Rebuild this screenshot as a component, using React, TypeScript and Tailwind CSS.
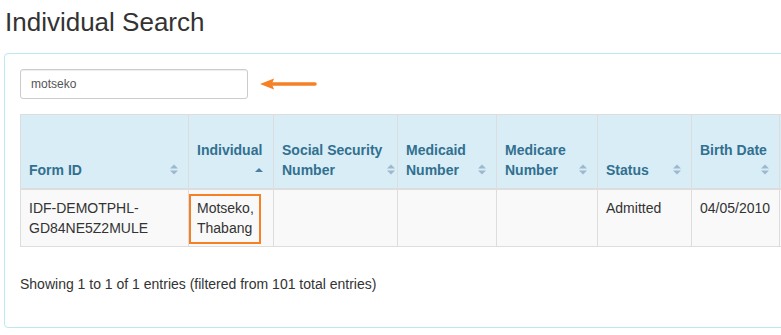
import * as React from "react";

type Column = {
  key: string;
  label: React.ReactNode;
  width: number;
  sort: "both" | "asc";
  stacked?: boolean;
};

const COLUMNS: readonly Column[] = [
  { key: "formId", label: "Form ID", width: 168, sort: "both" },
  { key: "individual", label: "Individual", width: 85, sort: "asc", stacked: true },
  { key: "ssn", label: <>Social Security<br />Number</>, width: 124, sort: "both" },
  { key: "medicaid", label: <>Medicaid<br />Number</>, width: 99, sort: "both" },
  { key: "medicare", label: <>Medicare<br />Number</>, width: 101, sort: "both" },
  { key: "status", label: "Status", width: 94, sort: "both" },
  { key: "birth", label: "Birth Date", width: 88, sort: "both", stacked: true },
  { key: "more", label: "", width: 110, sort: "both" },
];

const TABLE_WIDTH = COLUMNS.reduce((sum, c) => sum + c.width, 0);

function SortIcon({ dir }: { dir: "both" | "asc" }) {
  if (dir === "asc") {
    return (
      <svg aria-hidden="true" width="10" height="12" viewBox="0 0 10 12" className="shrink-0 text-[#4a7fa3]">
        <path d="M1 8 L5 4 L9 8 Z" fill="currentColor" />
      </svg>
    );
  }
  return (
    <svg aria-hidden="true" width="10" height="13" viewBox="0 0 10 13" className="shrink-0 text-[#9db8cc]">
      <path d="M1 5.5 L5 1.5 L9 5.5 Z" fill="currentColor" />
      <path d="M1 7.5 L5 11.5 L9 7.5 Z" fill="currentColor" />
    </svg>
  );
}

export default function App() {
  return (
    <div className="h-[335px] w-[781px] overflow-hidden bg-white font-['Liberation_Sans',Arial,sans-serif] text-[14px]/[20px] text-[#333]">
      <h3 className="m-0 pl-[5px] pt-[6px] text-[26px]/[32px] font-normal text-[#333]">Individual Search</h3>

      <section className="ml-1 mt-[15px] w-[800px] rounded-[4px] border border-[#bce8f1] p-[15px] pb-[33px]">
        <div className="flex items-center">
          <div className="flex h-[30px] w-[228px] items-center rounded-[3px] border border-[#ccc] px-[10px] text-[12px] text-[#555] shadow-[inset_0_1px_1px_rgba(0,0,0,0.075)]">
            motseko
          </div>
          <svg aria-hidden="true" width="60" height="14" viewBox="0 0 60 14" className="ml-[11px]">
            <path d="M14 7 H56" stroke="#f58025" strokeWidth="3.5" strokeLinecap="round" />
            <path d="M1 7 L15 1.5 L13 7 L15 12.5 Z" fill="#f58025" />
          </svg>
        </div>

        <table
          className="mt-[15px] table-fixed border-collapse border border-[#ddd]"
          style={{ width: TABLE_WIDTH }}
        >
          <colgroup>
            {COLUMNS.map((c) => (
              <col key={c.key} style={{ width: c.width }} />
            ))}
          </colgroup>
          <thead>
            <tr className="h-[74px] bg-[#d9edf7]">
              {COLUMNS.map((c) => (
                <th
                  key={c.key}
                  className="border border-b-2 border-[#ddd] px-2 pb-2 text-left align-bottom font-bold text-[#31708f]"
                >
                  {c.key === "more" ? null : c.stacked ? (
                    <div className="flex flex-col">
                      <span className="whitespace-nowrap">{c.label}</span>
                      <span className="flex h-5 items-center justify-end pr-[1px]">
                        <SortIcon dir={c.sort} />
                      </span>
                    </div>
                  ) : (
                    <div className="flex items-end justify-between gap-1">
                      <span className="whitespace-nowrap">{c.label}</span>
                      <span className="flex h-5 items-center pr-[1px]">
                        <SortIcon dir={c.sort} />
                      </span>
                    </div>
                  )}
                </th>
              ))}
            </tr>
          </thead>
          <tbody>
            <tr className="h-[57px] bg-[#f9f9f9]">
              <td className="border border-[#ddd] px-2 py-2 align-top">
                IDF-DEMOTPHL-
                <br />
                GD84NE5Z2MULE
              </td>
              <td className="relative border border-[#ddd] px-2 py-2 align-top">
                Motseko,
                <br />
                Thabang
                <span className="pointer-events-none absolute left-0 top-[4px] h-[50px] w-[72px] border-2 border-[#f58025]" />
              </td>
              <td className="border border-[#ddd] px-2 py-2 align-top" />
              <td className="border border-[#ddd] px-2 py-2 align-top" />
              <td className="border border-[#ddd] px-2 py-2 align-top" />
              <td className="border border-[#ddd] px-2 py-2 align-top">Admitted</td>
              <td className="border border-[#ddd] px-2 py-2 align-top">04/05/2010</td>
              <td className="border border-[#ddd] px-2 py-2 align-top" />
            </tr>
          </tbody>
        </table>

        <p className="m-0 mt-[27px]">Showing 1 to 1 of 1 entries (filtered from 101 total entries)</p>
      </section>
    </div>
  );
}
